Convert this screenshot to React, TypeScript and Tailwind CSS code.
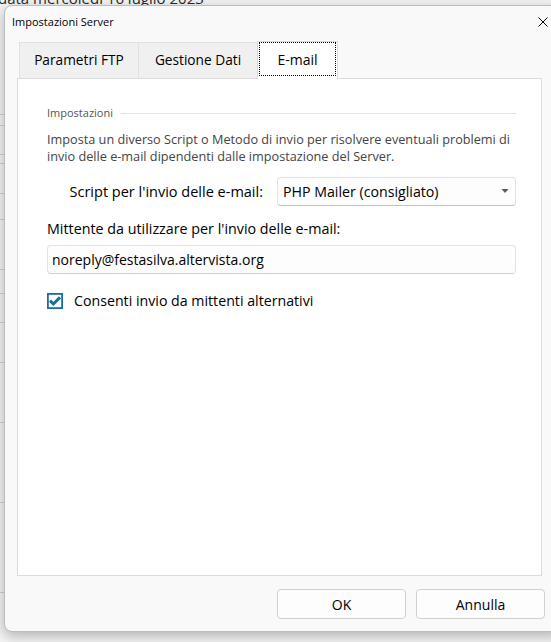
import React from 'react';

const tabs = [
  { label: 'Parametri FTP', width: 'w-[119px]', active: false },
  { label: 'Gestione Dati', width: 'w-[119px]', active: false },
  { label: 'E-mail', width: 'w-[81px]', active: true },
];

const bgRows = [25, 11, 29, 9, 30, 26, 50, 24, 29, 40, 60, 80, 90, 100];

export default function App() {
  return (
    <div className="relative w-[551px] h-[642px] overflow-hidden bg-[#f4f4f4] font-['Open_Sans','Noto_Sans',sans-serif]">
      {/* Background window behind the dialog */}
      <div className="absolute left-[-2px] top-[-11px] text-[15px] leading-[18px] text-[#2a2a2a] whitespace-nowrap">
        data mercoledì 16 luglio 2023
      </div>
      <div className="absolute left-0 top-[90px] w-[4px] flex flex-col">
        {bgRows.map((h, i) => (
          <div key={i} className="border-b border-[#cfcfcf]" style={{ height: h }} />
        ))}
      </div>

      {/* Dialog */}
      <div className="absolute left-[4px] top-[5px] w-[560px] h-[627px] rounded-[8px] border border-[#bdbdbd] bg-[#f9f9f9] shadow-[0_4px_14px_rgba(0,0,0,0.28)] flex flex-col">
        {/* Title bar */}
        <div className="h-[32px] flex items-center justify-between pl-[7px] pr-[15px]">
          <span className="text-[11px] text-black">Impostazioni Server</span>
          <svg width="10" height="10" viewBox="0 0 10 10" className="text-black">
            <path d="M0.5 0.5 L9.5 9.5 M9.5 0.5 L0.5 9.5" stroke="currentColor" strokeWidth="1" />
          </svg>
        </div>

        {/* Tabs */}
        <div className="ml-[12px] mt-[2px] w-[525px]">
          <div className="flex items-end h-[38px] pl-[2px]">
            {tabs.map((t) =>
              t.active ? (
                <div
                  key={t.label}
                  className={`${t.width} h-[38px] -mb-px relative z-10 bg-white border border-b-0 border-[#d9d9d9] flex items-center justify-center pb-[3px] text-[14px] text-black`}
                >
                  <span className="absolute left-[1px] right-[1px] top-[0px] bottom-[3px] border border-dotted border-black" />
                  {t.label}
                </div>
              ) : (
                <div
                  key={t.label}
                  className={`${t.width} h-[36px] bg-[#f0f0f0] border border-b-0 border-r-0 border-[#e1e1e1] flex items-center justify-center text-[13.7px] text-black`}
                >
                  {t.label}
                </div>
              )
            )}
          </div>

          {/* Panel */}
          <div className="h-[498px] bg-white border border-[#dcdcdc] pl-[29px] pr-[25px] pt-[26px]">
            <div className="flex items-center gap-[8px] h-[16px]">
              <span className="text-[11px] leading-[16px] text-[#555555]">Impostazioni</span>
              <div className="flex-1 h-px bg-[#e3e3e3]" />
            </div>

            <p className="mt-[10px] text-[12.7px] leading-[17px] text-[#444444] pr-[2px]">
              Imposta un diverso Script o Metodo di invio per risolvere eventuali problemi di invio delle e-mail dipendenti dalle impostazione del Server.
            </p>

            <div className="mt-[12px] flex items-center">
              <div className="w-[230px] pr-[14px] text-right text-[14.5px] text-black whitespace-nowrap">
                Script per l'invio delle e-mail:
              </div>
              <div className="flex-1 h-[29px] rounded-[4px] border border-[#e2e2e2] border-b-[#c4c4c4] bg-[#fdfdfd] flex items-center justify-between pl-[5px] pr-[6px]">
                <span className="text-[14.2px] text-black">PHP Mailer (consigliato)</span>
                <svg width="8" height="5" viewBox="0 0 8 5">
                  <path d="M0.5 0 L7.5 0 L4 4 Z" fill="#5c5c5c" />
                </svg>
              </div>
            </div>

            <div className="mt-[13px] text-[14.3px] leading-[20px] text-black">
              Mittente da utilizzare per l'invio delle e-mail:
            </div>

            <div className="mt-[6px] h-[29px] rounded-[4px] border border-[#e2e2e2] border-b-[#d0d0d0] bg-[#fdfdfd] flex items-center pl-[4px] text-[14px] text-black">
              noreply@festasilva.altervista.org
            </div>

            <div className="mt-[17px] flex items-center gap-[11px]">
              <svg width="16" height="16" viewBox="0 0 16 16">
                <rect x="0.9" y="0.9" width="14.2" height="14.2" fill="white" stroke="#1a6e9c" strokeWidth="1.8" />
                <path d="M3 7.6 L6.4 11 L13 4.4" fill="none" stroke="#1a6e9c" strokeWidth="3" />
              </svg>
              <span className="text-[14.2px] leading-[20px] text-black">Consenti invio da mittenti alternativi</span>
            </div>
          </div>
        </div>

        {/* Buttons */}
        <div className="mt-[13px] flex gap-[10px] pl-[272px]">
          <button className="w-[129px] h-[30px] rounded-[4px] border border-[#d0d0d0] bg-[#fdfdfd] text-[14px] text-black">
            OK
          </button>
          <button className="w-[129px] h-[30px] rounded-[4px] border border-[#d0d0d0] bg-[#fdfdfd] text-[14px] text-black">
            Annulla
          </button>
        </div>
      </div>
    </div>
  );
}
